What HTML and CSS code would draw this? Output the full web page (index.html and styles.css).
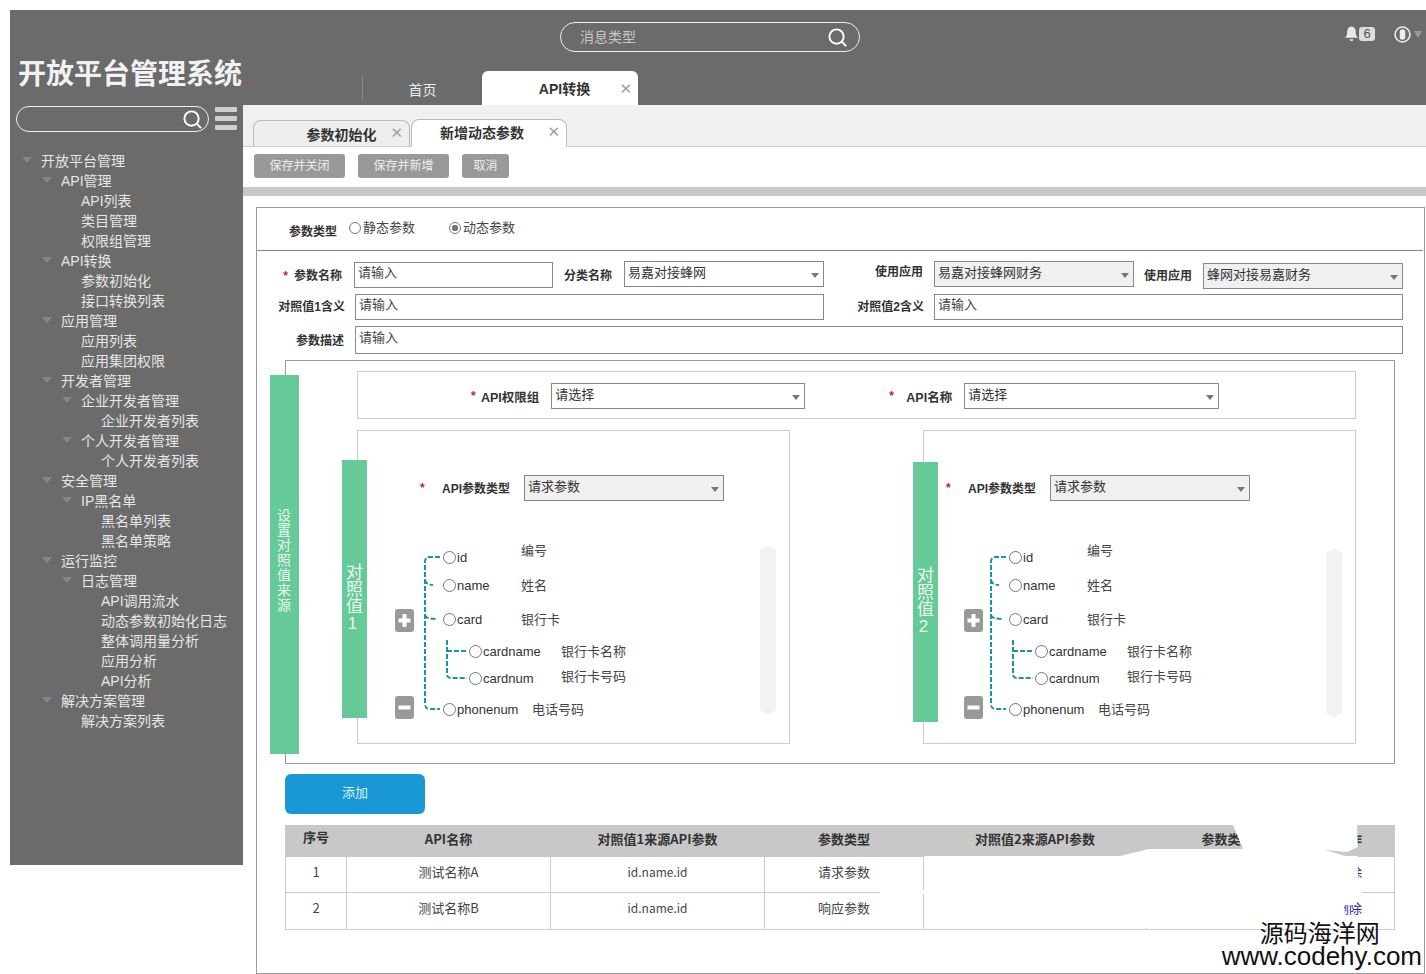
FILE: index.html
```html
<!DOCTYPE html>
<html lang="zh-CN">
<head>
    <meta charset="UTF-8">
    <title>开放平台管理系统</title>
    <link rel="stylesheet" href="styles.css">
</head>
<body>
<div class="app">
    <header class="topbar">
        <h1 class="brand">开放平台管理系统</h1>
        <div class="topbar-main">
            <div class="topbar-row">
                <div class="msg-search">
                    <span>消息类型</span>
                    <svg class="search-icon" viewBox="0 0 22 22"><circle cx="10" cy="10" r="7.5"/><path d="M15.5 15.5L20 20"/></svg>
                </div>
                <div class="user-tools">
                    <svg class="bell" viewBox="0 0 16 18"><path d="M8 1c-3 0-4.500 2.500-4.500 5 0 4-1 5.500-2.500 7h14c-1.500-1.500-2.500-3-2.500-7 0-2.500-1.500-5-4.500-5z"/><path d="M6 14.500h4a2 2 0 0 1-4 0z"/></svg>
                    <span class="badge">6</span>
                    <svg class="user" viewBox="0 0 16 16"><circle cx="8" cy="8" r="7"/><rect x="5.400" y="3" width="5.200" height="10" rx="2.600"/></svg>
                    <span class="user-caret"></span>
                </div>
            </div>
            <nav class="main-tabs">
                <a class="main-tab">首页</a>
                <a class="main-tab active">API转换<span class="close">✕</span></a>
            </nav>
        </div>
    </header>

    <div class="body-row">
        <aside class="sidebar">
            <div class="side-tools">
                <div class="side-search">
                    <svg class="search-icon" viewBox="0 0 22 22"><circle cx="10" cy="10" r="7.500"/><path d="M15.500 15.500L20 20"/></svg>
                </div>
                <div class="hamburger"><i></i><i></i><i></i></div>
            </div>
            <ul class="side-menu">
                <li class="lv0">开放平台管理</li>
                <li class="lv1">API管理</li>
                <li class="lv2 leaf">API列表</li>
                <li class="lv2 leaf">类目管理</li>
                <li class="lv2 leaf">权限组管理</li>
                <li class="lv1">API转换</li>
                <li class="lv2 leaf">参数初始化</li>
                <li class="lv2 leaf">接口转换列表</li>
                <li class="lv1">应用管理</li>
                <li class="lv2 leaf">应用列表</li>
                <li class="lv2 leaf">应用集团权限</li>
                <li class="lv1">开发者管理</li>
                <li class="lv2">企业开发者管理</li>
                <li class="lv3 leaf">企业开发者列表</li>
                <li class="lv2">个人开发者管理</li>
                <li class="lv3 leaf">个人开发者列表</li>
                <li class="lv1">安全管理</li>
                <li class="lv2">IP黑名单</li>
                <li class="lv3 leaf">黑名单列表</li>
                <li class="lv3 leaf">黑名单策略</li>
                <li class="lv1">运行监控</li>
                <li class="lv2">日志管理</li>
                <li class="lv3 leaf">API调用流水</li>
                <li class="lv3 leaf">动态参数初始化日志</li>
                <li class="lv3 leaf">整体调用量分析</li>
                <li class="lv3 leaf">应用分析</li>
                <li class="lv3 leaf">API分析</li>
                <li class="lv1">解决方案管理</li>
                <li class="lv2 leaf">解决方案列表</li>
            </ul>
        </aside>

        <main class="content">
            <div class="sub-tabs">
                <a class="sub-tab">参数初始化<span class="close">✕</span></a>
                <a class="sub-tab active">新增动态参数<span class="close">✕</span></a>
            </div>
            <div class="toolbar">
                <button class="btn btn-long">保存并关闭</button>
                <button class="btn btn-long">保存并新增</button>
                <button class="btn">取消</button>
            </div>
            <div class="band"></div>

            <section class="form-frame">
                <div class="type-row">
                    <span class="type-label">参数类型</span>
                    <label class="type-option"><span class="radio"></span>静态参数</label>
                    <label class="type-option"><span class="radio checked"></span>动态参数</label>
                </div>

                <div class="field-row row-one">
                    <span class="label w85"><em>*</em>参数名称</span>
                    <input class="input w199" placeholder="请输入">
                    <span class="label w59">分类名称</span>
                    <div class="select up w200">易嘉对接蜂网</div>
                    <span class="label label-high w99">使用应用</span>
                    <div class="select up grey w200">易嘉对接蜂网财务</div>
                    <span class="label w58">使用应用</span>
                    <div class="select down grey w200">蜂网对接易嘉财务</div>
                </div>
                <div class="field-row row-two">
                    <span class="label w88">对照值1含义</span>
                    <input class="input w469" placeholder="请输入">
                    <span class="label w100">对照值2含义</span>
                    <input class="input w469" placeholder="请输入">
                </div>
                <div class="field-row row-three">
                    <span class="label w87">参数描述</span>
                    <input class="input w1048" placeholder="请输入">
                </div>

                <div class="source-frame">
                    <div class="green-bar outer-bar">设置对照值来源</div>
                    <div class="source-body">
                        <div class="api-box">
                            <em class="star">*</em><span class="api-label">API权限组</span>
                            <div class="select w254">请选择</div>
                            <em class="star star-b">*</em><span class="api-label">API名称</span>
                            <div class="select w255">请选择</div>
                        </div>
                        <div class="panels">
                            <div class="panel panel-a">
                                <div class="green-bar panel-bar">对照值1</div>
                                <div class="panel-body">
                                    <div class="param-row">
                                        <em class="star">*</em><span class="api-label">API参数类型</span>
                                        <div class="select grey w200">请求参数</div>
                                    </div>
                                    <div class="tree-row">
                                        <div class="tree">
                                            <svg class="tree-lines" viewBox="0 0 90 175"><path d="M45 12H35Q30 12 30 17V159Q30 164 35 164H45M30 35Q31 40 38 40M30 70Q31 74 41 74"/><path d="M52 95V129Q52 133 56 133H72M52 106H72"/></svg>
                                            <div class="tree-tools">
                                                <svg viewBox="0 0 19 23"><rect width="19" height="23" rx="3"/><path d="M9.500 5v13M3.500 11.500h12"/></svg>
                                                <svg viewBox="0 0 19 23"><rect width="19" height="23" rx="3"/><path d="M3.500 11.500h12"/></svg>
                                            </div>
                                            <div class="tree-nodes">
                                                <div class="node"><span class="radio"></span><span class="node-name">id</span><span class="node-desc raised">编号</span></div>
                                                <div class="node"><span class="radio"></span><span class="node-name">name</span><span class="node-desc">姓名</span></div>
                                                <div class="node"><span class="radio"></span><span class="node-name">card</span><span class="node-desc">银行卡</span></div>
                                                <div class="node child"><span class="radio"></span><span class="node-name">cardname</span><span class="node-desc">银行卡名称</span></div>
                                                <div class="node child"><span class="radio"></span><span class="node-name">cardnum</span><span class="node-desc raised-sm">银行卡号码</span></div>
                                                <div class="node last"><span class="radio"></span><span class="node-name">phonenum</span><span class="node-desc">电话号码</span></div>
                                            </div>
                                        </div>
                                        <div class="scroll-track"></div>
                                    </div>
                                </div>
                            </div>
                            <div class="panel panel-b">
                                <div class="green-bar panel-bar">对照值2</div>
                                <div class="panel-body">
                                    <div class="param-row">
                                        <em class="star">*</em><span class="api-label">API参数类型</span>
                                        <div class="select grey w200">请求参数</div>
                                    </div>
                                    <div class="tree-row">
                                        <div class="tree">
                                            <svg class="tree-lines" viewBox="0 0 90 175"><path d="M45 12H35Q30 12 30 17V159Q30 164 35 164H45M30 35Q31 40 38 40M30 70Q31 74 41 74"/><path d="M52 95V129Q52 133 56 133H72M52 106H72"/></svg>
                                            <div class="tree-tools">
                                                <svg viewBox="0 0 19 23"><rect width="19" height="23" rx="3"/><path d="M9.500 5v13M3.500 11.500h12"/></svg>
                                                <svg viewBox="0 0 19 23"><rect width="19" height="23" rx="3"/><path d="M3.500 11.500h12"/></svg>
                                            </div>
                                            <div class="tree-nodes">
                                                <div class="node"><span class="radio"></span><span class="node-name">id</span><span class="node-desc raised">编号</span></div>
                                                <div class="node"><span class="radio"></span><span class="node-name">name</span><span class="node-desc">姓名</span></div>
                                                <div class="node"><span class="radio"></span><span class="node-name">card</span><span class="node-desc">银行卡</span></div>
                                                <div class="node child"><span class="radio"></span><span class="node-name">cardname</span><span class="node-desc">银行卡名称</span></div>
                                                <div class="node child"><span class="radio"></span><span class="node-name">cardnum</span><span class="node-desc raised-sm">银行卡号码</span></div>
                                                <div class="node last"><span class="radio"></span><span class="node-name">phonenum</span><span class="node-desc">电话号码</span></div>
                                            </div>
                                        </div>
                                        <div class="scroll-track"></div>
                                    </div>
                                </div>
                            </div>
                        </div>
                    </div>
                </div>

                <button class="btn-add">添加</button>

                <div class="table-wrap">
                    <table class="result-table">
                        <colgroup>
                            <col class="c-no"><col class="c-name"><col class="c-src"><col class="c-type"><col class="c-src2"><col class="c-type2"><col class="c-op">
                        </colgroup>
                        <thead>
                            <tr><th class="th-no">序号</th><th>API名称</th><th>对照值1来源API参数</th><th>参数类型</th><th>对照值2来源API参数</th><th>参数类型</th><th class="op">操作</th></tr>
                        </thead>
                        <tbody>
                            <tr><td>1</td><td>测试名称A</td><td class="code">id.name.id</td><td>请求参数</td><td></td><td></td><td class="op">删除</td></tr>
                            <tr><td>2</td><td>测试名称B</td><td class="code">id.name.id</td><td>响应参数</td><td></td><td></td><td class="op">删除</td></tr>
                        </tbody>
                    </table>
                    <svg class="table-erase" viewBox="0 0 1110 105"><path d="M639 31H835L864 24H958L948 0H1072L1073 22L1062 27L1040 25L1060 31H1073V63H1077V71H1072V80H1059V103H639Z"/><rect x="595" y="65" width="44" height="4"/></svg>
                </div>
            </section>
        </main>
    </div>
</div>
<div class="watermark">
    <div class="wm-cn">源码海洋网</div>
    <div class="wm-en">www.codehy.com</div>
</div>
</body>
</html>
```

FILE: styles.css
```css
* {
    box-sizing: border-box;
}

html, body {
    height: 100%;
}

body {
    margin: 0;
    background: #fff;
    color: #333;
    font-family: "Liberation Sans", "Noto Sans CJK SC", sans-serif;
    font-size: 13px;
    overflow: hidden;
}

em {
    font-style: normal;
}

.app {
    height: 974px;
    padding: 10px 0 0 10px;
    display: flex;
    flex-direction: column;
}

/* top bar */
.topbar {
    height: 95px;
    background: #6b6b6b;
    display: flex;
    flex-shrink: 0;
}

.brand {
    width: 233px;
    flex-shrink: 0;
    margin: 0;
    padding: 44px 0 0 8px;
    font-size: 28px;
    line-height: 42px;
    color: #f2f2f2;
    white-space: nowrap;
}

.topbar-main {
    flex: 1;
    display: flex;
    flex-direction: column;
    justify-content: space-between;
    padding-top: 12px;
}

.topbar-row {
    display: flex;
    align-items: flex-start;
    padding-left: 317px;
}

.msg-search {
    width: 300px;
    height: 30px;
    border: 1px solid #eee;
    border-radius: 15px;
    display: flex;
    align-items: center;
    justify-content: space-between;
    padding: 0 11px 0 19px;
    color: #c8c8c8;
    font-size: 14px;
}

.msg-search span {
    margin-bottom: 2px;
}

.search-icon {
    width: 21px;
    height: 21px;
    fill: none;
    stroke: #fff;
    stroke-width: 2;
}

.user-tools {
    margin-left: auto;
    margin-right: 4px;
    display: flex;
    align-items: center;
    height: 22px;
    margin-top: 1px;
}

.bell {
    width: 15px;
    height: 18px;
    fill: #e8e8e8;
}

.badge {
    width: 16px;
    height: 14px;
    border-radius: 3px;
    background: #dcdcdc;
    color: #555;
    font-size: 13px;
    line-height: 14px;
    text-align: center;
}

.user {
    width: 17px;
    height: 17px;
    margin-left: 19px;
    fill: none;
    stroke: #eee;
    stroke-width: 1.500;
}

.user rect {
    fill: #eee;
    stroke: none;
}

.user-caret {
    margin-left: 3px;
    border-top: 7px solid #999;
    border-left: 4px solid transparent;
    border-right: 4px solid transparent;
}

.main-tabs {
    display: flex;
    align-items: flex-end;
    margin-left: 119px;
    height: 34px;
}

.main-tab {
    height: 26px;
    width: 120px;
    margin-bottom: 4px;
    position: relative;
    text-align: center;
    font-size: 14px;
    line-height: 30px;
    color: #ececec;
    border-left: 1px solid #888;
}

.main-tab.active {
    width: 156px;
    height: 34px;
    margin-bottom: 0;
    padding-left: 9px;
    border: 0;
    border-radius: 6px 6px 0 0;
    background: #fff;
    color: #333;
    font-weight: bold;
    line-height: 36px;
}

.close {
    position: absolute;
    right: 6px;
    top: 0;
    color: #a0a0a0;
    font-size: 15px;
    font-weight: bold;
    font-family: "DejaVu Sans", sans-serif;
}

/* sidebar */
.body-row {
    flex: 1;
    display: flex;
    min-height: 0;
}

.sidebar {
    width: 233px;
    height: 760px;
    flex-shrink: 0;
    background: #6b6b6b;
}

.side-tools {
    display: flex;
    padding: 1px 0 0 6px;
    align-items: flex-start;
}

.side-search {
    width: 193px;
    height: 26px;
    border: 1px solid #eee;
    border-radius: 13px;
    display: flex;
    justify-content: flex-end;
    align-items: center;
    padding-right: 5px;
}

.hamburger {
    width: 22px;
    margin: 1px 0 0 6px;
    display: flex;
    flex-direction: column;
    gap: 4px;
}

.hamburger i {
    height: 5px;
    border-radius: 1px;
    background: #cfcfcf;
}

.side-menu {
    list-style: none;
    margin: 18px 0 0;
    padding: 0;
}

.side-menu li {
    display: flex;
    align-items: center;
    height: 20px;
    font-size: 14px;
    color: #e6e6e6;
    white-space: nowrap;
}

.side-menu li::before {
    content: "";
    margin-right: 9px;
    border-top: 6px solid #868686;
    border-left: 5px solid transparent;
    border-right: 5px solid transparent;
}

.side-menu li.leaf::before {
    border-top-color: transparent;
}

.lv0 { padding-left: 12px; }
.lv1 { padding-left: 32px; }
.lv2 { padding-left: 52px; }
.lv3 { padding-left: 72px; }

/* main content */
.content {
    flex: 1;
    min-width: 0;
    display: flex;
    flex-direction: column;
}

.sub-tabs {
    height: 42px;
    flex-shrink: 0;
    background: #f0f0f0;
    border-bottom: 1px solid #ccc;
    display: flex;
    align-items: flex-end;
    padding-left: 10px;
}

.sub-tab {
    position: relative;
    width: 157px;
    height: 27px;
    margin-bottom: -1px;
    padding-left: 20px;
    border: 1px solid #bbb;
    border-bottom-color: #ccc;
    border-radius: 8px 8px 0 0;
    background: #eee;
    text-align: center;
    font-size: 14px;
    font-weight: bold;
    line-height: 28px;
    white-space: nowrap;
}

.sub-tab.active {
    width: 156px;
    height: 28px;
    margin-left: 1px;
    padding: 0 14px 0 0;
    background: #fff;
    border-bottom-color: #fff;
    line-height: 26px;
}

.sub-tab .close {
    right: 6px;
    line-height: 24px;
}

.toolbar {
    height: 40px;
    flex-shrink: 0;
    display: flex;
    gap: 13px;
    padding: 7px 0 0 11px;
}

.btn {
    width: 47px;
    height: 24px;
    padding: 0 0 3px;
    border: 0;
    border-radius: 3px;
    background: #999;
    color: #eee;
    font-family: inherit;
    font-size: 12px;
}

.btn-long {
    width: 91px;
}

.band {
    height: 9px;
    flex-shrink: 0;
    background: #c8c8c8;
}

.form-frame {
    flex: 1;
    min-height: 0;
    margin: 11px 1px 0 13px;
    border: 1px solid #999;
}

.type-row {
    height: 43px;
    margin-right: 1px;
    border-bottom: 1px solid #888;
    display: flex;
    align-items: center;
    padding-left: 32px;
}

.type-label {
    width: 60px;
    margin-top: 3px;
    font-size: 12px;
    font-weight: bold;
}

.type-option {
    width: 100px;
    display: flex;
    align-items: center;
    gap: 2px;
    color: #444;
    margin-top: -6px;
}

.type-option .radio {
    margin-top: 3px;
}

.radio {
    width: 12px;
    height: 12px;
    flex-shrink: 0;
    border: 1px solid #777;
    border-radius: 50%;
    background: #fff;
}

.radio.checked {
    border-color: #777;
    background: radial-gradient(circle, #777 0 3px, #fff 3.500px);
}

.field-row {
    display: flex;
    align-items: center;
    height: 26px;
    margin-top: 6px;
}

.row-one {
    margin-top: 11px;
}

.row-three {
    height: 28px;
}

.label {
    flex-shrink: 0;
    margin-right: 11px;
    padding-bottom: 2px;
    text-align: right;
    font-size: 12px;
    font-weight: bold;
    white-space: nowrap;
}

.row-two .label {
    padding-bottom: 4px;
}

.label-high {
    padding-bottom: 10px;
}

.label em,
.star {
    color: #c0223a;
    font-size: 12px;
    font-weight: bold;
}

.label em {
    margin-right: 6px;
}

.w58 { width: 58px; }
.w59 { width: 59px; margin-right: 12px; }
.w85 { width: 85px; margin-right: 12px; }
.w87 { width: 87px; }
.w88 { width: 88px; margin-right: 10px; }
.w99 { width: 99px; }
.w100 { width: 100px; margin-right: 10px; }

.input,
.select {
    height: 26px;
    flex-shrink: 0;
    border: 1px solid #888;
    background: #fff;
    color: #333;
    font-family: inherit;
    font-size: 13px;
    padding: 0 3px;
}

.input {
    padding-bottom: 6px;
    outline: none;
}

.input::placeholder {
    color: #444;
    opacity: 1;
}

.row-three .input {
    height: 28px;
}

.w199 { width: 199px; }
.w200 { width: 200px; }
.w254 { width: 254px; }
.w255 { width: 255px; }
.w469 { width: 469px; }
.w1048 { width: 1048px; }

.select {
    position: relative;
    line-height: 22px;
}

.select.up {
    margin-bottom: 2px;
}

.select.down {
    margin-top: 2px;
}

.select::after {
    content: "";
    position: absolute;
    right: 4px;
    top: 11px;
    border-top: 5px solid #777;
    border-left: 4px solid transparent;
    border-right: 4px solid transparent;
}

.select.grey {
    background: #f0f0f0;
}

/* source frame */
.source-frame {
    display: flex;
    height: 404px;
    margin: 6px 0 0 28px;
    width: 1110px;
    border: 1px solid #999;
}

.green-bar {
    flex-shrink: 0;
    background: #66c998;
    color: #eaf7f0;
    writing-mode: vertical-rl;
    text-orientation: upright;
    text-align: center;
}

.outer-bar {
    width: 29px;
    margin: 14px 0 9px -16px;
    padding-bottom: 8px;
    font-size: 14px;
    letter-spacing: 1px;
    line-height: 33px;
}

.source-body {
    width: 999px;
    margin-left: 58px;
    padding-top: 10px;
}

.api-box {
    height: 48px;
    border: 1px solid #ccc;
    display: flex;
    align-items: center;
    padding: 2px 0 0 113px;
}

.api-box .star {
    width: 10px;
}

.api-box .star-b {
    width: 17px;
    margin-left: 84px;
}

.api-label {
    font-size: 12.500px;
    font-weight: bold;
    color: #333;
    margin-right: 12px;
    white-space: nowrap;
}

.panels {
    display: flex;
    justify-content: space-between;
    margin-top: 11px;
}

.panel {
    width: 433px;
    height: 314px;
    border: 1px solid #ccc;
    display: flex;
}

.panel-bar {
    width: 25px;
    font-size: 17px;
    line-height: 29px;
    padding-top: 18px;
}

.panel-a .panel-bar {
    margin: 29px 0 25px -16px;
}

.panel-b .panel-bar {
    margin: 31px 0 21px -11px;
}

.panel-body {
    flex: 1;
    padding-top: 44px;
}

.param-row {
    display: flex;
    align-items: center;
    height: 26px;
}

.param-row .star {
    width: 22px;
}

.panel-a .param-row {
    padding-left: 53px;
}

.panel-b .param-row {
    padding-left: 8px;
}

.param-row .api-label {
    width: 69px;
    margin-right: 13px;
    padding-bottom: 2px;
    font-size: 12px;
}

.tree-row {
    display: flex;
    margin-top: 44px;
}

.panel-a .tree-row {
    padding-left: 28px;
}

.panel-b .tree-row {
    padding-left: 23px;
}

.tree {
    position: relative;
    display: flex;
    height: 175px;
}

.tree-lines {
    position: absolute;
    left: 0;
    top: 0;
    width: 90px;
    height: 175px;
    fill: none;
    stroke: #1a93a8;
    stroke-width: 2;
    stroke-dasharray: 5 2;
}

.tree-tools {
    width: 48px;
    padding-top: 64px;
    display: flex;
    flex-direction: column;
    gap: 64px;
}

.panel-b .tree-tools {
    padding-left: 3px;
}

.tree-tools svg {
    width: 19px;
    height: 23px;
    display: block;
    fill: #999;
    stroke: none;
}

.tree-tools path {
    fill: none;
    stroke: #fff;
    stroke-width: 4;
}

.node {
    display: flex;
    align-items: center;
    height: 24px;
    color: #333;
    white-space: nowrap;
}

.node:nth-child(2) { margin-top: 4px; }
.node:nth-child(3) { margin-top: 10px; }
.node:nth-child(4) { margin-top: 8px; }
.node:nth-child(5) { margin-top: 3px; }
.node:nth-child(6) { margin-top: 7px; }

.node .radio {
    width: 13px;
    height: 13px;
    margin-right: 1px;
}

.node-name {
    width: 64px;
}

.child {
    padding-left: 26px;
}

.child .node-name {
    width: 78px;
}

.last .node-name {
    width: 75px;
}

.node-desc {
    margin-bottom: 2px;
    color: #444;
}

.node-desc.raised {
    margin-bottom: 16px;
}

.node-desc.raised-sm {
    margin-bottom: 6px;
}

.scroll-track {
    width: 16px;
    height: 170px;
    margin-left: auto;
    background: #f2f2f2;
    clip-path: polygon(50% 0, 100% 3%, 100% 97%, 50% 100%, 0 97%, 0 3%);
}

.panel-a .scroll-track {
    margin-right: 13px;
}

.panel-b .scroll-track {
    margin-right: 13px;
    margin-top: 3px;
}

/* add button + table */
.btn-add {
    display: block;
    width: 140px;
    height: 40px;
    margin: 10px 0 0 28px;
    padding: 0 0 6px;
    border: 0;
    border-radius: 6px;
    background: #1a98d5;
    color: #d8f0fa;
    font-family: inherit;
    font-size: 13px;
}

.table-wrap {
    position: relative;
    width: 1110px;
    margin: 11px 0 0 28px;
}

.result-table {
    width: 1109px;
    table-layout: fixed;
    border-collapse: collapse;
    font-family: "Noto Sans CJK SC", sans-serif;
    font-size: 13px;
}

.c-no { width: 61px; }
.c-name { width: 204px; }
.c-src { width: 214px; }
.c-type { width: 159px; }
.c-src2 { width: 223px; }
.c-type2 { width: 162px; }
.c-op { width: 86px; }

.result-table th {
    height: 31px;
    padding: 0 0 6px;
    border: 1px solid #c8c8c8;
    background: #c8c8c8;
    color: #333;
    font-weight: bold;
}

.result-table th.th-no {
    padding-bottom: 10px;
}

.result-table td {
    height: 36px;
    padding: 0 0 6px;
    border: 1px solid #ccc;
    color: #444;
    line-height: 16px;
    text-align: center;
}

.result-table tr:last-child td {
    height: 37px;
}

.result-table td.code {
    font-size: 12px;
}

.result-table .op {
    padding-right: 5px;
}

.result-table td.op {
    color: #22228c;
}

.table-erase {
    position: absolute;
    left: 0;
    top: 0;
    width: 1110px;
    height: 105px;
    fill: #fff;
}

.watermark {
    position: absolute;
    right: 4px;
    bottom: 6px;
    color: #111;
    text-align: center;
}

.wm-cn {
    padding-right: 4px;
    font-family: "Noto Sans CJK SC", sans-serif;
    font-size: 24px;
    line-height: 24px;
}

.wm-en {
    font-family: "Liberation Sans", sans-serif;
    font-size: 26px;
    line-height: 24px;
}
```
